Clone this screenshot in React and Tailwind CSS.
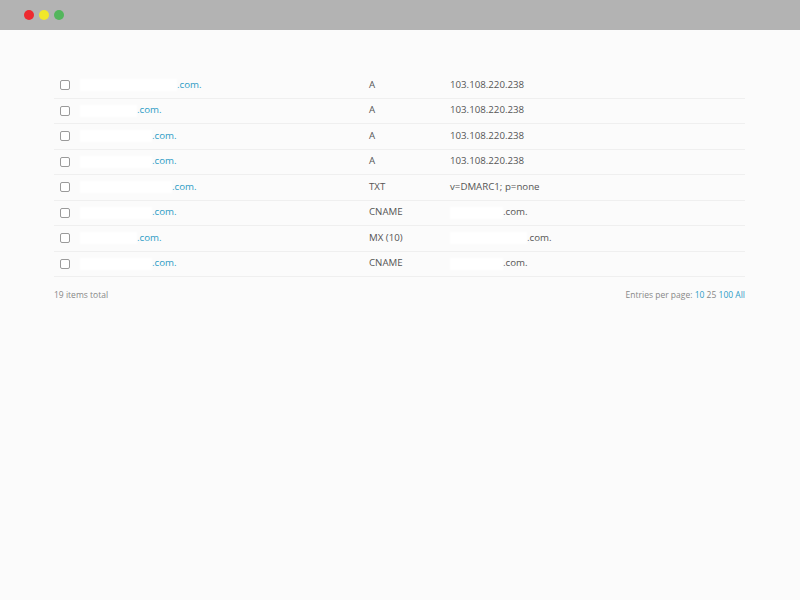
const ROWS = [
  { name: 97, type: 'A', value: '103.108.220.238' },
  { name: 57, type: 'A', value: '103.108.220.238' },
  { name: 72, type: 'A', value: '103.108.220.238' },
  { name: 72, type: 'A', value: '103.108.220.238' },
  { name: 92, type: 'TXT', value: 'v=DMARC1; p=none' },
  { name: 72, type: 'CNAME', value: null, hidden: 53 },
  { name: 57, type: 'MX (10)', value: null, hidden: 77 },
  { name: 72, type: 'CNAME', value: null, hidden: 53 },
]

function Redacted({ width }) {
  return <span className="inline-block h-[12px] bg-white blur-[1px]" style={{ width }} />
}

export default function App() {
  return (
    <div
      className="min-h-[600px] bg-[#fbfbfb] text-[9.7px] text-[#555]"
      style={{ fontFamily: '"Open Sans", sans-serif' }}
    >
      {/* window bar */}
      <div className="flex h-[30px] items-center gap-[5px] bg-[#b3b3b3] pl-[24px]">
        <span className="h-[10px] w-[10px] rounded-full bg-[#ee2a2f]" />
        <span className="h-[10px] w-[10px] rounded-full bg-[#f1e82a]" />
        <span className="h-[10px] w-[10px] rounded-full bg-[#53b65c]" />
      </div>

      <div className="pl-[54px] pr-[55px] pt-[43px]">
        <div className="flex flex-col">
          {ROWS.map((row, i) => (
            <div key={i} className="flex h-[25.5px] items-center border-b border-[#efefef]">
              <div className="flex w-[26px] items-center pl-[6px]">
                <span className="h-[10px] w-[10px] rounded-[2px] border border-[#9a9a9a] bg-white" />
              </div>
              <div className="flex w-[289px] items-center text-[#2d9bc6]">
                <Redacted width={row.name} />
                <span>.com.</span>
              </div>
              <div className="w-[81px]">{row.type}</div>
              <div className="flex items-center">
                {row.value ? (
                  row.value
                ) : (
                  <>
                    <Redacted width={row.hidden} />
                    <span>.com.</span>
                  </>
                )}
              </div>
            </div>
          ))}
        </div>

        <div className="mt-[12px] flex items-center justify-between text-[8.5px] text-[#888]">
          <span>19 items total</span>
          <span>
            Entries per page: <span className="text-[#2d9bc6]">10</span> 25{' '}
            <span className="text-[#2d9bc6]">100</span> <span className="text-[#2d9bc6]">All</span>
          </span>
        </div>
      </div>
    </div>
  )
}
